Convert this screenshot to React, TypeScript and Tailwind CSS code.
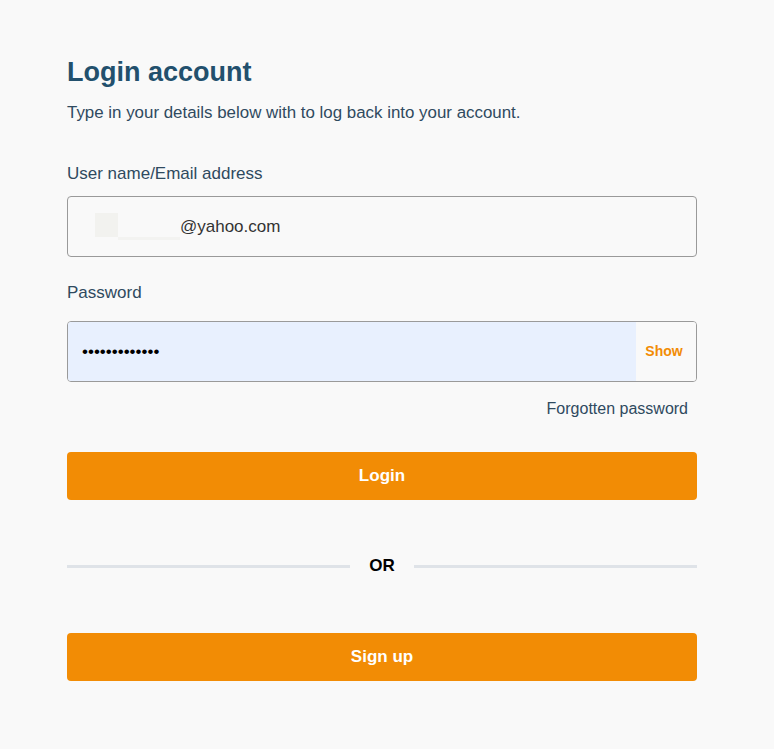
import React from "react";

export default function App() {
  return (
    <div
      className="min-h-[749px] w-full bg-[#f9f9f9] text-[#2b4a60]"
      style={{ fontFamily: '"Liberation Sans", Arial, sans-serif' }}
    >
      <div className="ml-[67px] w-[630px] pt-[56px]">
        <h1 className="text-[27px] font-bold leading-[32px] text-[#22506d]">Login account</h1>
        <p className="mt-[15px] text-[16.9px] leading-[20px] text-[#2f4a5f]">
          Type in your details below with to log back into your account.
        </p>

        <label className="mt-[41px] block text-[17px] leading-[20px] text-[#2f4a5f]">
          User name/Email address
        </label>
        <div className="mt-[12px] flex h-[61px] items-center rounded-[4px] border border-[#9a9a9a] bg-[#f9f9f9] pl-[27px]">
          <div className="relative h-[27px] w-[85px]">
            <div className="absolute left-0 top-0 h-[24px] w-[23px] bg-[#f2f2ef]" />
            <div className="absolute left-[23px] top-[24px] h-[3px] w-[62px] bg-[#f3f3f1]" />
          </div>
          <span className="text-[17px] text-[#333]">@yahoo.com</span>
        </div>

        <label className="mt-[26px] block text-[17px] leading-[20px] text-[#2f4a5f]">Password</label>
        <div className="mt-[18px] flex h-[61px] overflow-hidden rounded-[4px] border border-[#9a9a9a]">
          <div className="flex flex-1 items-center bg-[#e8f0fe] pl-[14px]">
            <span className="text-[17px] text-black">•••••••••••••</span>
          </div>
          <div className="flex w-[60px] items-center justify-center bg-[#f9f9f9] pr-[4px]">
            <span className="text-[14px] font-bold text-[#f28c05]">Show</span>
          </div>
        </div>

        <div className="mt-[17px] flex justify-end pr-[9px]">
          <span className="text-[16px] leading-[20px] text-[#2f4a5f]">Forgotten password</span>
        </div>

        <button className="mt-[33px] flex h-[48px] w-full items-center justify-center rounded-[4px] bg-[#f28c05] text-[17px] font-bold text-white">
          Login
        </button>

        <div className="mt-[56px] flex h-[20px] items-center">
          <div className="h-[3px] flex-1 bg-[#dfe3e8]" />
          <span className="px-[19px] text-[17px] font-bold leading-[20px] text-black">OR</span>
          <div className="h-[3px] flex-1 bg-[#dfe3e8]" />
        </div>

        <button className="mt-[57px] flex h-[48px] w-full items-center justify-center rounded-[4px] bg-[#f28c05] text-[17px] font-bold text-white">
          Sign up
        </button>
      </div>
    </div>
  );
}
